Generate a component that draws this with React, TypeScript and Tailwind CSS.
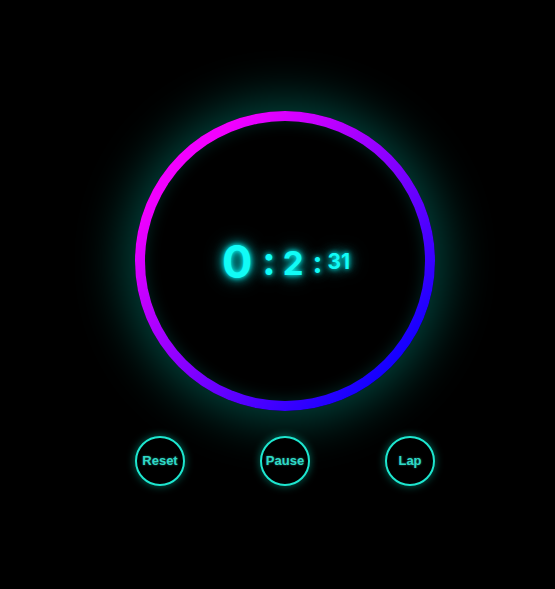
export default function App() {
  const glow = { textShadow: "0 0 5px #00ffff, 0 0 12px rgba(0,255,255,0.8), 0 0 20px rgba(0,255,255,0.4)" };
  return (
    <div className="w-[555px] h-[589px] bg-black flex flex-col items-center pt-[111px] pl-[15px]">
      <div className="w-[300px] h-[300px] rounded-full p-[10px] bg-[linear-gradient(135deg,#f200ff_18%,#7a00ff_55%,#0a00ff_88%)] shadow-[0_0_50px_10px_rgba(0,180,160,0.4)]">
        <div className="w-full h-full rounded-full bg-black shadow-[inset_0_0_16px_rgba(0,110,100,0.35)] flex items-center justify-center">
          <div
            className="flex items-center text-[#12fbf6] font-bold leading-none pl-[2px] pt-[1px]"
            style={{ fontFamily: "Inter, 'Noto Sans', sans-serif", ...glow }}
          >
            <span className="text-[45px]">0</span>
            <span className="text-[40px] ml-[10px] mr-[7px] -mt-[1px]">:</span>
            <span className="text-[33px] mt-[4px]">2</span>
            <span className="text-[30px] ml-[9px] mr-[5px]">:</span>
            <span className="text-[21px] -mt-[1px]">31</span>
          </div>
        </div>
      </div>
      <div className="w-[300px] mt-[25px] flex justify-between">
        {["Reset", "Pause", "Lap"].map((t) => (
          <button
            key={t}
            className="w-[50px] h-[50px] rounded-full border-2 border-[#1ee6cf] bg-black text-[#2fd9c6] font-bold text-[13px] flex items-center justify-center shadow-[0_0_8px_rgba(0,230,200,0.45)]"
            style={{ fontFamily: "'Liberation Sans', Arial, sans-serif", textShadow: "0 0 2px rgba(47,217,198,0.6)" }}
          >
            {t}
          </button>
        ))}
      </div>
    </div>
  );
}
